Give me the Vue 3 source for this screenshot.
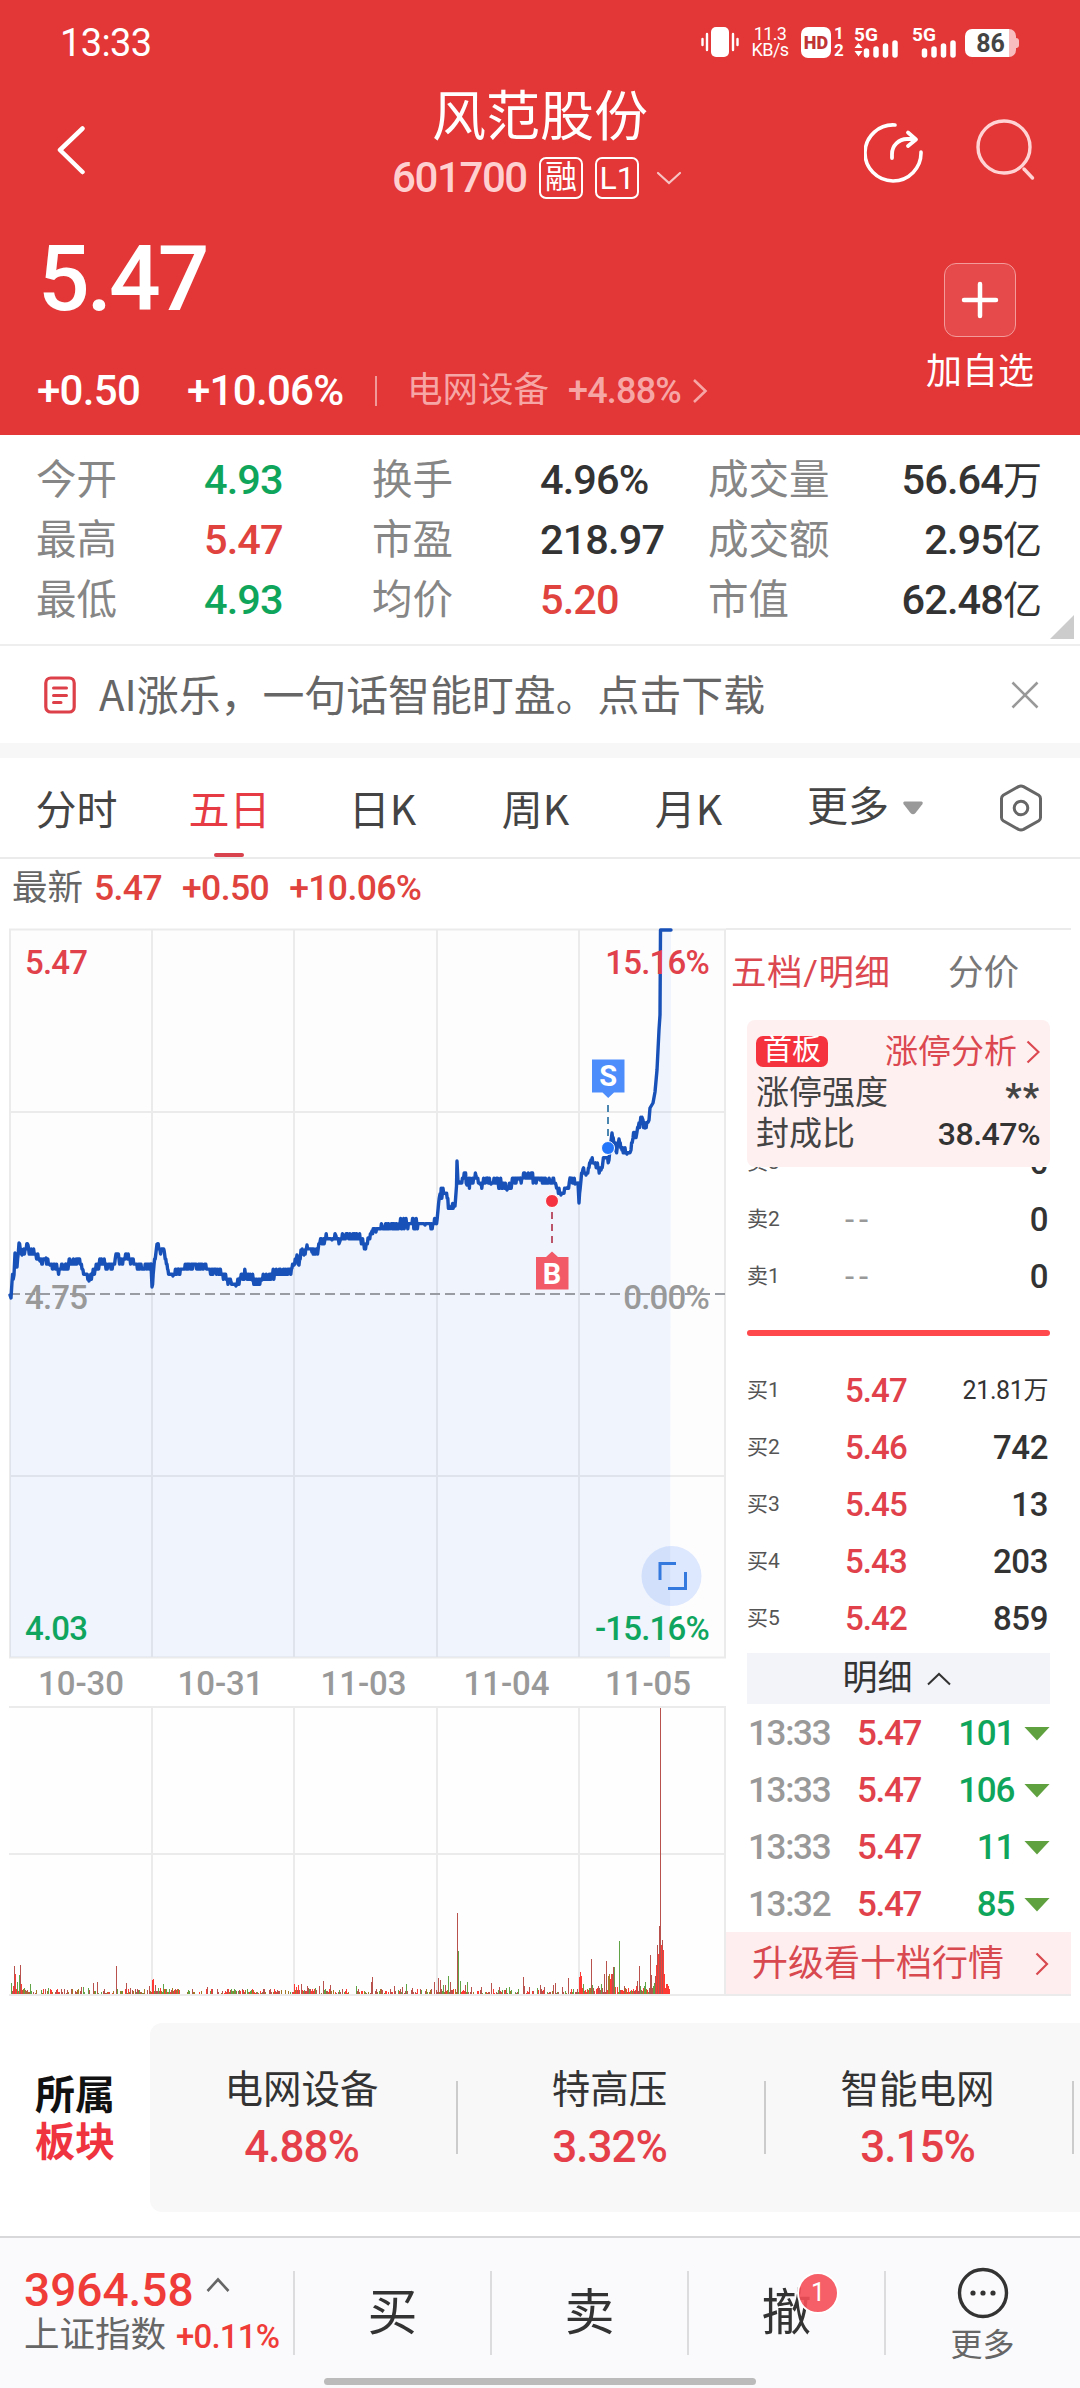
<script setup>
import { computed, ref } from 'vue'

const stats = [
  [
    { label: '今开', value: '4.93', tone: 'down' },
    { label: '换手', value: '4.96%' },
    { label: '成交量', value: '56.64', unit: '万' },
  ],
  [
    { label: '最高', value: '5.47', tone: 'up' },
    { label: '市盈', value: '218.97' },
    { label: '成交额', value: '2.95', unit: '亿' },
  ],
  [
    { label: '最低', value: '4.93', tone: 'down' },
    { label: '均价', value: '5.20', tone: 'up' },
    { label: '市值', value: '62.48', unit: '亿' },
  ],
]

const tabs = ['分时', '五日', '日K', '周K', '月K']
const activeTab = ref('五日')

const asks = [
  { name: '卖3', price: '--', qty: '0' },
  { name: '卖2', price: '--', qty: '0' },
  { name: '卖1', price: '--', qty: '0' },
]

const bids = [
  { name: '买1', price: '5.47', qty: '21.81', unit: '万' },
  { name: '买2', price: '5.46', qty: '742' },
  { name: '买3', price: '5.45', qty: '13' },
  { name: '买4', price: '5.43', qty: '203' },
  { name: '买5', price: '5.42', qty: '859' },
]

const ticks = [
  { time: '13:33', price: '5.47', qty: '101' },
  { time: '13:33', price: '5.47', qty: '106' },
  { time: '13:33', price: '5.47', qty: '11' },
  { time: '13:32', price: '5.47', qty: '85' },
]

const sectors = [
  { name: '电网设备', value: '4.88%' },
  { name: '特高压', value: '3.32%' },
  { name: '智能电网', value: '3.15%' },
]

const dates = [
  { x: 81, label: '10-30' },
  { x: 220.5, label: '10-31' },
  { x: 363.5, label: '11-03' },
  { x: 506.5, label: '11-04' },
  { x: 648, label: '11-05' },
]

const dayLines = [152, 294, 437, 579]

// small deterministic generator so the minute noise is stable between renders
const makeRandom = (seed) => {
  let s = seed
  return () => {
    s = (s * 16807) % 2147483647
    return s / 2147483647
  }
}

const anchors = [
  [10, 375], [11, 378], [12, 362], [14, 355], [15, 333], [17, 347], [19, 323], [22, 335], [25, 330], [28, 325],
  [30, 332], [36, 335], [40, 341], [46, 338], [50, 345], [58, 350], [65, 345], [75, 342], [79, 339], [83, 350],
  [89, 361], [95, 350], [103, 340], [108, 346], [114, 344], [116, 334], [122, 344], [127, 336], [132, 340],
  [138, 346], [151, 344], [152, 367], [154, 345], [157, 324], [160, 330], [164, 330], [168, 350], [173, 356],
  [178, 350], [190, 345], [204, 345], [210, 350], [218, 352], [225, 358], [231, 362], [236, 366], [240, 358],
  [246, 354], [252, 360], [262, 360], [268, 358], [272, 354], [278, 353], [286, 353], [292, 348], [294, 345],
  [297, 335], [299, 345], [301, 330], [304, 335], [307, 325], [312, 332], [317, 331], [320, 322], [325, 319],
  [332, 320], [336, 316], [340, 321], [348, 314], [356, 317], [362, 320], [365, 327], [368, 318], [372, 311],
  [376, 312], [382, 306], [390, 306], [400, 304], [412, 303], [425, 305], [436, 303], [438, 290], [440, 274],
  [446, 274], [449, 286], [455, 286], [456.5, 266], [457, 241], [458, 262], [460, 262], [465, 255], [467, 265], [476, 256], [480, 264],
  [487, 260], [491, 264], [500, 263], [507, 270], [513, 259], [520, 260], [527, 254], [532, 258], [540, 260],
  [550, 261], [556, 265], [561, 275], [568, 267], [570, 258], [575, 264], [578, 263], [579, 283], [581, 260],
  [583, 249], [586, 255], [591, 240], [595, 244], [601, 250], [604, 238], [609, 240], [612, 213], [616, 231],
  [619, 219], [622, 230], [627, 234], [631, 230], [633, 218], [637, 212], [639, 203], [643, 200], [645, 208],
  [649, 200], [650, 188], [653, 183], [655, 172], [657, 150], [659, 110], [660, 95], [660.5, 10], [671, 10],
]

const STEP = 5.06
const NOISY_UNTIL = 648

const linePoints = computed(() => {
  const rand = makeRandom(4217)
  const points = []
  for (let i = 0; i < anchors.length - 1; i += 1) {
    const [x0, y0] = anchors[i]
    const [x1, y1] = anchors[i + 1]
    points.push([x0, y0])
    if (x0 >= NOISY_UNTIL) continue
    for (let x = x0 + 0.6; x < x1 - 0.4; x += 0.6) {
      const mid = y0 + ((y1 - y0) * (x - x0)) / (x1 - x0)
      const y = Math.round((mid + (rand() - 0.5) * 7) / STEP) * STEP
      points.push([Number(x.toFixed(1)), Number(y.toFixed(1))])
    }
  }
  points.push(anchors[anchors.length - 1])
  return points
})

const linePath = computed(() => `M${linePoints.value.map((p) => p.join(' ')).join('L')}`)
const areaPath = computed(() => `${linePath.value}L670 737L10 737Z`)

// [x, height, tone] for the bars that stand out of the minute-volume floor
const spikes = [
  [11, 11, 'g'], [13, 8, 'r'], [14, 28, 'd'], [15, 20, 'r'], [17, 12, 'g'], [19, 19, 'g'], [20, 29, 'd'], [21, 10, 'r'],
  [30, 10, 'g'], [48, 6, 'g'], [81, 7, 'd'], [83, 7, 'g'], [88, 6, 'g'], [93, 11, 'd'], [97, 12, 'd'], [116, 28, 'd'],
  [126, 11, 'd'], [130, 6, 'd'], [137, 5, 'd'], [149, 8, 'd'], [152, 14, 'r'], [153, 15, 'r'], [155, 9, 'd'], [158, 6, 'g'],
  [163, 10, 'g'], [166, 5, 'g'], [175, 5, 'd'], [207, 7, 'd'], [227, 5, 'd'], [235, 4, 'g'], [270, 5, 'd'], [277, 4, 'd'],
  [294, 10, 'r'], [296, 7, 'r'], [298, 9, 'r'], [301, 10, 'd'], [307, 8, 'd'], [319, 8, 'd'], [323, 13, 'd'], [330, 9, 'd'],
  [342, 5, 'd'], [356, 8, 'g'], [371, 12, 'd'], [372, 17, 'd'], [394, 8, 'd'], [402, 7, 'd'], [406, 10, 'g'], [412, 6, 'd'],
  [434, 12, 'd'], [438, 16, 'd'], [440, 14, 'd'], [443, 9, 'g'], [445, 9, 'd'], [448, 18, 'g'], [450, 12, 'd'], [457, 81, 'd'],
  [458, 43, 'g'], [460, 13, 'g'], [465, 9, 'd'], [467, 12, 'g'], [471, 7, 'd'], [481, 7, 'd'], [491, 11, 'd'], [499, 7, 'd'],
  [506, 6, 'g'], [509, 7, 'g'], [523, 17, 'd'], [524, 8, 'd'], [529, 7, 'd'], [537, 6, 'g'], [540, 9, 'd'], [544, 7, 'd'],
  [553, 9, 'd'], [555, 11, 'd'], [562, 7, 'd'], [568, 16, 'd'], [579, 17, 'r'], [580, 22, 'r'], [581, 18, 'r'], [583, 10, 'g'],
  [591, 35, 'd'], [592, 9, 'g'], [598, 8, 'd'], [601, 10, 'g'], [604, 20, 'd'], [606, 33, 'd'], [608, 18, 'o'], [609, 20, 'o'],
  [610, 15, 'r'], [611, 20, 'r'], [612, 20, 'd'], [613, 27, 'd'], [614, 27, 'g'], [615, 7, 'r'], [617, 7, 'r'], [619, 53, 'g'],
  [624, 8, 'd'], [636, 8, 'r'], [637, 13, 'd'], [639, 28, 'd'], [640, 8, 'g'], [644, 8, 'g'], [645, 12, 'g'], [650, 39, 'd'],
  [651, 19, 'd'], [653, 8, 'g'], [654, 11, 'g'], [655, 18, 'd'], [656, 29, 'r'], [657, 49, 'd'], [658, 40, 'r'], [659, 68, 'd'],
  [660, 286, 'd'], [661, 49, 'r'], [662, 54, 'd'], [663, 44, 'r'], [664, 20, 'r'], [665, 6, 'r'], [666, 10, 'r'], [667, 10, 'r'],
  [668, 8, 'r'], [669, 5, 'r'],
]

const barColors = { r: '#ff3a34', d: '#b8524d', g: '#5fa346', o: '#a37a26' }

const bars = computed(() => {
  const rand = makeRandom(977)
  const used = new Map(spikes.map(([x, h, tone]) => [x, { x, h, tone }]))
  const result = []
  for (let x = 11; x < 670; x += 1) {
    const roll = rand()
    const pick = rand()
    if (used.has(x)) {
      result.push(used.get(x))
      continue
    }
    // the opening minutes of each session trade thicker than the rest
    const sinceOpen = (x - 10) % 142.4
    const busy = sinceOpen < 22 || x > 579
    if (roll < (busy ? 0.08 : 0.36)) continue
    const h = busy ? 2 + Math.floor(roll * 5) : 1 + Math.floor(roll * roll * 5)
    const tone = pick < 0.4 ? 'd' : pick < 0.62 ? 'r' : pick < 0.82 ? 'o' : 'g'
    result.push({ x, h, tone })
  }
  return result
})
</script>

<template>
  <div class="page">
    <header class="hero">
      <div class="status">
        <span class="status__time">13:33</span>
        <svg class="status__vibrate" viewBox="0 0 38 32">
          <rect x="10" y="1" width="18" height="30" rx="5" fill="#fff" />
          <path d="M1.5 13v6M36.5 13v6M6 8v16M32 8v16" stroke="#fff" stroke-width="2.4" stroke-linecap="round" />
        </svg>
        <div class="status__net"><span>11.3</span><span>KB/s</span></div>
        <div class="status__hd">HD</div>
        <div class="status__sim"><span>1</span><span>2</span></div>
        <svg class="status__signal" viewBox="0 0 46 32">
          <text x="0" y="15" class="signal-text">5G</text>
          <path d="M0.5 22L4.5 17L8.500 22ZM0.5 25L4.5 30.5L8.5 25Z" fill="#fff" />
          <path d="M12.5 25v4M22 23v6M31.5 20v9M41 17v12" stroke="#fff" stroke-width="5.5" stroke-linecap="round" />
        </svg>
        <svg class="status__signal status__signal--second" viewBox="0 0 46 32">
          <text x="0" y="15" class="signal-text">5G</text>
          <path d="M12.5 25v4M22 23v6M31.5 20v9M41 17v12" stroke="#fff" stroke-width="5.5" stroke-linecap="round" />
        </svg>
        <div class="battery"><span class="battery__body">86</span><i class="battery__cap" /></div>
      </div>

      <div class="nav">
        <svg class="nav__back" viewBox="0 0 30 50">
          <path d="M26.5 3.5L4 25L26.5 47" fill="none" stroke="#fff" stroke-width="4.5" stroke-linecap="round" stroke-linejoin="round" />
        </svg>
        <div class="nav__title">
          <h1>风范股份</h1>
          <div class="nav__code">
            <span class="num nav__symbol">601700</span>
            <span class="chip">融</span>
            <span class="chip chip--latin">L1</span>
            <svg class="nav__more" viewBox="0 0 26 14">
              <path d="M2 2L13 12L24 2" fill="none" stroke="#fff" stroke-opacity="0.7" stroke-width="2.2" stroke-linecap="round" />
            </svg>
          </div>
        </div>
        <svg class="nav__share" viewBox="0 0 60 62">
          <path d="M31 3A28 28 0 1 0 57 30" fill="none" stroke="#fff" stroke-width="3.6" stroke-linecap="round" />
          <path d="M28 36V32A15 15 0 0 1 43 17H51M44 10.5L52 17.5L44 24" fill="none" stroke="#fff" stroke-width="3.8" stroke-linecap="round" stroke-linejoin="round" />
        </svg>
        <svg class="nav__search" viewBox="0 0 60 62">
          <g fill="none" stroke="#ffd3d3" stroke-width="3.4" stroke-linecap="round">
            <circle cx="28" cy="28" r="26" />
            <path d="M48 50L56.5 59" />
          </g>
        </svg>
      </div>

      <div class="quote">
        <div class="quote__left">
          <div class="quote__price">5.47</div>
          <div class="quote__row">
            <span class="num quote__change">+0.50</span>
            <span class="num quote__pct">+10.06%</span>
            <i class="quote__rule" />
            <span class="quote__sector">电网设备</span>
            <span class="num quote__sector-pct">+4.88%</span>
            <svg class="quote__arrow" viewBox="0 0 16 26">
              <path d="M2 2L13.5 13L2 24" fill="none" stroke="#f7a6a6" stroke-width="2.6" />
            </svg>
          </div>
        </div>
        <div class="favorite">
          <div class="favorite__box">
            <svg viewBox="0 0 72 72">
              <path d="M36 20V52M20 36H52" stroke="#fff" stroke-width="4.5" stroke-linecap="round" />
            </svg>
          </div>
          <span>加自选</span>
        </div>
      </div>
    </header>

    <section class="stats">
      <div v-for="(row, i) in stats" :key="i" class="stats__row">
        <template v-for="item in row" :key="item.label">
          <span class="stats__label">{{ item.label }}</span>
          <span class="stats__value num" :class="item.tone">{{ item.value }}<b v-if="item.unit">{{ item.unit }}</b></span>
        </template>
      </div>
      <i class="stats__corner" />
    </section>

    <section class="banner">
      <svg class="banner__icon" viewBox="0 0 32 38">
        <rect x="1.8" y="2" width="28.4" height="34" rx="5" fill="none" stroke="#dd4048" stroke-width="3.2" />
        <path d="M9.5 12H22.5M9.5 19.5H22.5M9.5 26.5H17" stroke="#dd4048" stroke-width="3" stroke-linecap="round" />
      </svg>
      <span class="banner__text">AI涨乐，一句话智能盯盘。点击下载</span>
      <svg class="banner__close" viewBox="0 0 28 28">
        <path d="M1.5 1.5L26.5 26.5M26.5 1.5L1.5 26.5" stroke="#999" stroke-width="2.6" />
      </svg>
    </section>

    <nav class="tabs">
      <button
        v-for="tab in tabs"
        :key="tab"
        type="button"
        class="tabs__item"
        :class="{ 'tabs__item--active': tab === activeTab }"
        @click="activeTab = tab"
      >
        {{ tab }}
      </button>
      <span class="tabs__more">更多</span>
      <svg class="tabs__caret" viewBox="0 0 20 14"><path d="M1.5 0.5H18.5Q20.5 1 19.3 3.2L12.5 12Q10 14.5 7.5 12L0.7 3.2Q-0.5 1 1.5 0.5Z" fill="#999" /></svg>
      <svg class="tabs__gear" viewBox="0 0 44 48">
        <path d="M19.5 2.6Q22 1.3 24.5 2.6L39.8 11.2Q41.5 12.4 41.5 14.5V33.5Q41.5 35.6 39.8 36.8L24.5 45.4Q22 46.7 19.5 45.4L4.2 36.8Q2.5 35.6 2.5 33.5V14.5Q2.5 12.4 4.2 11.2Z" fill="none" stroke="#666" stroke-width="3" />
        <circle cx="22" cy="24" r="6.8" fill="none" stroke="#666" stroke-width="3" />
      </svg>
    </nav>

    <div class="latest">
      <span class="latest__label">最新</span>
      <span class="num">5.47</span>
      <span class="num">+0.50</span>
      <span class="num">+10.06%</span>
    </div>

    <main class="market">
      <svg class="chart" viewBox="0 0 726 1080">
        <rect x="10" y="9" width="715" height="729" fill="#fdfdfe" />
        <rect x="10" y="787" width="715" height="288" fill="#fefefe" />
        <g stroke="#ebebec" stroke-width="2" fill="none">
          <path d="M9 9.5H726M10 192H725M10 556H725M9 737.5H726M9 787H726M9 934H726M9 1075H726M10 9V738M725 9V738M725 787V1075" />
          <path v-for="x in dayLines" :key="x" :d="`M${x} 10V737M${x} 787V1075`" />
        </g>
        <path :d="areaPath" fill="#4a86f0" fill-opacity="0.08" />
        <path d="M10 374H725" stroke="#9a9ca3" stroke-width="2" stroke-dasharray="10 5" />
        <path :d="linePath" fill="none" stroke="#1851b8" stroke-width="3.4" stroke-linejoin="round" stroke-linecap="round" />

        <g class="chart__text">
          <text x="25" y="54" class="is-up">5.47</text>
          <text x="709" y="54" text-anchor="end" class="is-up">15.16%</text>
          <text x="25" y="389" class="is-flat">4.75</text>
          <text x="709" y="389" text-anchor="end" class="is-flat">0.00%</text>
          <text x="709" y="720" text-anchor="end" class="is-down">-15.16%</text>
          <text x="25" y="720" class="is-down">4.03</text>
          <text v-for="d in dates" :key="d.label" :x="d.x" y="775" text-anchor="middle" class="is-flat is-date">{{ d.label }}</text>
        </g>

        <g>
          <path d="M608 185V222" stroke="#4b86b0" stroke-width="2" stroke-dasharray="7 5" />
          <path d="M592 139.5H624.5V172.5H614L608.2 178L602.5 172.5H592Z" fill="#4d8dfb" />
          <text x="608.2" y="166" text-anchor="middle" class="chart__flag">S</text>
          <circle cx="608" cy="228" r="6.5" fill="#2375fa" stroke="#fff" stroke-width="1" />
        </g>
        <g>
          <path d="M552 292V328" stroke="#bb5569" stroke-width="2" stroke-dasharray="7 5" />
          <path d="M536 337H546L552 331.5L558 337H568.5V369.5H536Z" fill="#f25a68" />
          <text x="552" y="363.5" text-anchor="middle" class="chart__flag">B</text>
          <circle cx="552" cy="281" r="6.5" fill="#f5323f" stroke="#fff" stroke-width="1" />
        </g>

        <circle cx="671.5" cy="656" r="30" fill="#5e90fb" fill-opacity="0.2" />
        <path d="M660 660V643.5H676M685.5 652V668.5H668" fill="none" stroke="#3479de" stroke-width="3" />

        <rect v-for="bar in bars" :key="bar.x" :x="bar.x" :y="1074 - bar.h" width="1" :height="bar.h" :fill="barColors[bar.tone]" />
      </svg>

      <aside class="side">
        <div class="side__tabs"><span class="side__tab--active">五档/明细</span><span>分价</span></div>
        <div class="limit">
          <div class="limit__row">
            <span class="limit__badge">首板</span>
            <span class="limit__link">涨停分析</span>
            <svg class="limit__arrow" viewBox="0 0 14 24"><path d="M1.5 1.5L12.5 12L1.5 22.5" fill="none" stroke="#dc4850" stroke-width="2.2" /></svg>
          </div>
          <div class="limit__row"><span>涨停强度</span><span class="limit__stars">**</span></div>
          <div class="limit__row"><span>封成比</span><span class="num limit__num">38.47%</span></div>
        </div>
        <div class="asks">
          <div v-for="row in asks" :key="row.name" class="level">
            <span class="level__name">{{ row.name }}</span>
            <span class="num level__dash">{{ row.price }}</span>
            <span class="num level__qty">{{ row.qty }}</span>
          </div>
        </div>
        <div class="ratio" />
        <div class="bids">
          <div v-for="row in bids" :key="row.name" class="level">
            <span class="level__name">{{ row.name }}</span>
            <span class="num level__price">{{ row.price }}</span>
            <span class="num level__qty" :class="{ 'level__qty--small': row.unit }">{{ row.qty }}{{ row.unit }}</span>
          </div>
        </div>
        <div class="detail">
          <span>明细</span>
          <svg viewBox="0 0 24 14"><path d="M1 12.5L12 2L23 12.5" fill="none" stroke="#333" stroke-width="2" /></svg>
        </div>
        <div class="ticks">
          <div v-for="(tick, i) in ticks" :key="i" class="tick num">
            <span class="tick__time">{{ tick.time }}</span>
            <span class="tick__price">{{ tick.price }}</span>
            <span class="tick__qty">{{ tick.qty }}</span>
            <i class="tick__down" />
          </div>
        </div>
        <div class="upgrade">
          <span>升级看十档行情</span>
          <svg viewBox="0 0 14 24"><path d="M1.5 1.5L12 12L1.5 22.5" fill="none" stroke="#d8494f" stroke-width="2.2" /></svg>
        </div>
      </aside>
    </main>

    <section class="sectors">
      <div class="sectors__title"><span>所属</span><span class="sectors__title-red">板块</span></div>
      <div class="sectors__list">
        <div v-for="item in sectors" :key="item.name" class="sector">
          <span class="sector__name">{{ item.name }}</span>
          <span class="num sector__value">{{ item.value }}</span>
        </div>
      </div>
    </section>

    <footer class="dock">
      <div class="dock__index">
        <div class="dock__line">
          <span class="num dock__point">3964.58</span>
          <svg viewBox="0 0 24 16"><path d="M1.5 14L12 2.5L22.5 14" fill="none" stroke="#666" stroke-width="2.6" /></svg>
        </div>
        <div class="dock__line dock__line--sub"><span>上证指数</span><span class="num dock__pct">+0.11%</span></div>
      </div>
      <div class="dock__action">买</div>
      <div class="dock__action">卖</div>
      <div class="dock__action">撤<em class="dock__badge">1</em></div>
      <div class="dock__more">
        <svg viewBox="0 0 52 52">
          <circle cx="26" cy="26" r="23.5" fill="none" stroke="#333" stroke-width="3.4" />
          <g fill="#333"><circle cx="16" cy="26" r="2.6" /><circle cx="26" cy="26" r="2.6" /><circle cx="36" cy="26" r="2.6" /></g>
        </svg>
        <span>更多</span>
      </div>
      <i class="dock__home" />
    </footer>
  </div>
</template>

<style>
body {
  margin: 0;
  background: #fff;
}
</style>

<style scoped>
.page {
  width: 1080px;
  height: 2388px;
  overflow: hidden;
  display: flex;
  flex-direction: column;
  background: #fff;
  color: #333;
  font-family: Roboto, 'Noto Sans CJK SC', sans-serif;
  line-height: 1;
  white-space: nowrap;
}

.page * {
  box-sizing: border-box;
}

.page svg {
  display: block;
  flex: none;
}

.num {
  font-family: Roboto, 'Noto Sans CJK SC', sans-serif;
  font-weight: 500;
}

.up {
  color: #e0423e;
}

.down {
  color: #0fa65c;
}

.hero {
  height: 435px;
  flex: none;
  background: #e33636;
  color: #fff;
}

.status {
  height: 84px;
  display: flex;
  align-items: center;
  padding-left: 60px;
}

.status__time {
  width: 641px;
  padding-top: 1px;
  font-size: 38px;
  letter-spacing: -0.6px;
}

.status__vibrate {
  width: 38px;
  height: 32px;
}

.status__net {
  width: 36px;
  margin-left: 13px;
  display: flex;
  flex-direction: column;
  align-items: center;
  font-size: 18px;
  line-height: 16.5px;
  letter-spacing: -0.6px;
}

.status__hd {
  width: 30px;
  height: 31px;
  margin-left: 13px;
  border-radius: 7px;
  background: #fff;
  color: #c03436;
  font-size: 18px;
  font-weight: 900;
  line-height: 31px;
  text-align: center;
}

.status__sim {
  width: 12px;
  margin-left: 2px;
  display: flex;
  flex-direction: column;
  align-items: center;
  font-size: 17px;
  font-weight: 700;
  line-height: 17px;
}

.status__signal {
  width: 46px;
  height: 32px;
  margin-left: 9px;
  overflow: visible;
}

.status__signal--second {
  margin-left: 12px;
}

.signal-text {
  fill: #fff;
  font-size: 19px;
  font-weight: 700;
}

.battery {
  display: flex;
  align-items: center;
  margin: 2px 0 0 7px;
}

.battery__body {
  width: 51px;
  height: 28px;
  border-radius: 7px;
  background: linear-gradient(90deg, #fff 44px, #f8bcbe 44px);
  color: #444;
  font-size: 25px;
  font-weight: 700;
  line-height: 29px;
  text-align: center;
}

.battery__cap {
  width: 3px;
  height: 10px;
  border-radius: 0 3px 3px 0;
  background: #f8bcbe;
}

.nav {
  height: 132px;
  display: flex;
}

.nav__back {
  width: 30px;
  height: 50px;
  margin: 41px 0 0 56px;
}

.nav__title {
  width: 310px;
  margin-left: 306px;
}

.nav__title h1 {
  margin: 5px 0 0 40px;
  font-size: 54px;
  font-weight: 400;
  line-height: 58px;
}

.nav__code {
  height: 42px;
  margin-top: 10px;
  display: flex;
  align-items: center;
}

.nav__symbol {
  width: 147px;
  color: #ffd0d0;
  font-size: 42px;
  letter-spacing: -1.4px;
}

.chip {
  width: 44px;
  height: 42px;
  margin-right: 12px;
  border: 2px solid #fff;
  border-radius: 7px;
  font-size: 32px;
  line-height: 36px;
  text-align: center;
}

.chip--latin {
  line-height: 39px;
}

.nav__more {
  width: 26px;
  height: 14px;
  margin-left: 5px;
}

.nav__share {
  width: 60px;
  height: 62px;
  margin: 38px 0 0 162px;
}

.nav__search {
  width: 60px;
  height: 62px;
  margin: 35px 0 0 52px;
}

.quote {
  height: 219px;
  display: flex;
  justify-content: space-between;
}

.quote__price {
  margin: 18px 0 0 38px;
  height: 90px;
  font-size: 91px;
  font-weight: 500;
  letter-spacing: -3px;
  line-height: 90px;
}

.quote__row {
  height: 46px;
  margin-top: 44px;
  padding-left: 37px;
  display: flex;
  align-items: center;
  font-size: 42px;
}

.quote__change {
  width: 150px;
  letter-spacing: -0.7px;
}

.quote__pct {
  width: 188px;
  letter-spacing: -0.7px;
}

.quote__rule {
  width: 2px;
  height: 30px;
  background: #f09a9a;
}

.quote__sector {
  width: 161px;
  margin-left: 30px;
  color: #f7a6a6;
  font-size: 35.5px;
}

.quote__sector-pct {
  width: 124px;
  color: #f7a6a6;
  font-size: 36px;
  letter-spacing: -0.8px;
}

.quote__arrow {
  width: 16px;
  height: 26px;
}

.favorite {
  width: 108px;
  margin: 47px 46px 0 0;
  display: flex;
  flex-direction: column;
  align-items: center;
  font-size: 36px;
}

.favorite__box {
  width: 72px;
  height: 74px;
  margin-bottom: 17px;
  border: 1.5px solid #f39a9a;
  border-radius: 12px;
  background: #e64a4b;
  display: flex;
  align-items: center;
  justify-content: center;
}

.favorite__box svg {
  width: 72px;
  height: 72px;
}

.stats {
  position: relative;
  height: 211px;
  flex: none;
  padding-top: 15px;
  border-bottom: 2px solid #eee;
}

.stats__row {
  height: 60px;
  display: grid;
  grid-template-columns: 168px 168px 168px 168px 150px 184px;
  align-items: center;
  padding-left: 36px;
}

.stats__label {
  color: #868686;
  font-size: 40.5px;
}

.stats__value {
  font-size: 41.5px;
  letter-spacing: -0.9px;
}

.stats__value:last-child {
  text-align: right;
}

.stats__value b {
  font-size: 39px;
  font-weight: 400;
  letter-spacing: 0;
}

.stats__corner {
  position: absolute;
  right: 6px;
  bottom: 5px;
  width: 24px;
  height: 24px;
  background: #ccc;
  clip-path: polygon(100% 0, 100% 100%, 0 100%);
}

.banner {
  height: 112px;
  flex: none;
  padding: 0 41px 0 44px;
  display: flex;
  align-items: center;
  border-bottom: 15px solid #f7f7f7;
}

.banner__icon {
  width: 32px;
  height: 38px;
}

.banner__text {
  margin: -3px 0 0 23px;
  color: #666;
  font-family: 'Noto Sans CJK SC', sans-serif;
  font-size: 41.9px;
}

.banner__close {
  width: 28px;
  height: 28px;
  margin-left: auto;
}

.tabs {
  height: 101px;
  flex: none;
  display: flex;
  align-items: center;
  border-bottom: 2px solid #ebebeb;
}

.tabs__item {
  position: relative;
  width: 153px;
  height: 99px;
  padding: 0;
  border: 0;
  background: none;
  color: #444;
  font-family: 'Noto Sans CJK SC', sans-serif;
  font-size: 41px;
  line-height: 95px;
}

.tabs__item--active {
  color: #e63b45;
}

.tabs__item--active::after {
  content: '';
  position: absolute;
  left: 61px;
  bottom: 0;
  width: 30px;
  height: 4px;
  border-radius: 2px;
  background: #d8434d;
}

.tabs__more {
  margin-left: 42px;
  color: #444;
  font-size: 41px;
}

.tabs__caret {
  width: 20px;
  height: 14px;
  margin-left: 14px;
}

.tabs__gear {
  width: 44px;
  height: 48px;
  margin-left: 76px;
}

.latest {
  height: 61px;
  flex: none;
  padding: 0 0 2px 12px;
  display: flex;
  align-items: center;
  gap: 20px;
  color: #e0423e;
  font-size: 35.5px;
  letter-spacing: -0.6px;
}

.latest__label {
  margin-right: -9px;
  color: #666;
  letter-spacing: 0;
}

.market {
  height: 1080px;
  flex: none;
  display: flex;
}

.chart {
  width: 726px;
  height: 1080px;
}

.chart__text {
  font-size: 33px;
  font-weight: 500;
  letter-spacing: -0.8px;
}

.chart__flag {
  fill: #fff;
  font-size: 29px;
  font-weight: 700;
}

.is-up {
  fill: #e0414b;
}

.is-down {
  fill: #10a55f;
}

.is-flat {
  fill: #999;
}

.is-date {
  letter-spacing: 0;
}

.side {
  width: 345px;
  height: 1068px;
  margin-top: 8px;
  border-top: 2px solid #ebebec;
  border-bottom: 2px solid #ebebec;
}

.side__tabs {
  height: 90px;
  padding: 0 52px 2px 5px;
  display: flex;
  align-items: center;
  justify-content: space-between;
  color: #777;
  font-size: 35.5px;
}

.side__tab--active {
  color: #dc4850;
  letter-spacing: 0.6px;
}

.limit {
  position: relative;
  height: 147px;
  margin: 0 21px;
  padding: 11px 10px 0 9px;
  border-radius: 8px;
  background: #fef0f1;
  color: #444;
  font-size: 33px;
}

.limit__row {
  height: 41px;
  display: flex;
  align-items: center;
  justify-content: space-between;
}

.limit__badge {
  width: 72px;
  height: 31px;
  margin-right: 48px;
  border-radius: 7px;
  background: #f5333f;
  color: #fff;
  font-size: 29px;
  line-height: 29px;
  text-align: center;
}

.limit__link {
  color: #dc4850;
}

.limit__arrow {
  width: 14px;
  height: 24px;
}

.limit__stars {
  padding-top: 9px;
  font-size: 36px;
  font-weight: 700;
  letter-spacing: 1px;
}

.limit__num {
  color: #333;
  font-size: 32px;
  letter-spacing: -0.5px;
}

.asks {
  height: 138px;
  padding: 0 21px;
  display: flex;
  flex-direction: column;
  justify-content: flex-end;
  overflow: hidden;
}

.level {
  height: 57px;
  flex: none;
  display: grid;
  grid-template-columns: 98px 70px 1fr;
  align-items: center;
  padding: 0 2px 0 0;
}

.level__name {
  color: #555;
  font-size: 21px;
}

.level__dash {
  color: #999;
  font-size: 33px;
  font-weight: 400;
  letter-spacing: 5px;
}

.level__price {
  color: #e0414b;
  font-size: 33px;
  letter-spacing: -0.9px;
}

.level__qty {
  font-size: 33px;
  letter-spacing: -0.4px;
  text-align: right;
}

.level__qty--small {
  font-size: 25px;
  font-weight: 400;
}

.ratio {
  height: 6px;
  margin: 25px 21px 26px;
  border-radius: 3px;
  background: #ff484b;
}

.bids {
  padding: 0 21px;
}

.detail {
  height: 51px;
  margin: 6px 21px 0;
  padding-right: 4px;
  display: flex;
  align-items: center;
  justify-content: center;
  gap: 14px;
  background: #f3f4f9;
  color: #333;
  font-size: 35px;
}

.detail svg {
  width: 24px;
  height: 14px;
}

.ticks {
  padding: 0 21px;
}

.tick {
  height: 57px;
  display: grid;
  grid-template-columns: 109px 70px 1fr 36px;
  align-items: center;
  padding: 2px 0 0 1px;
  font-size: 35px;
  letter-spacing: -1.3px;
}

.tick__time {
  color: #999;
}

.tick__price {
  color: #e0414b;
}

.tick__qty {
  color: #0fa65c;
  text-align: right;
}

.tick__down {
  width: 26px;
  height: 14px;
  margin-left: 10px;
  background: #5fa03f;
  clip-path: polygon(0 0, 100% 0, 50% 100%);
}

.upgrade {
  height: 62px;
  padding: 2px 22px 0 26px;
  display: flex;
  align-items: center;
  justify-content: space-between;
  background: #feeeef;
  color: #d8494f;
  font-size: 36px;
}

.upgrade svg {
  width: 14px;
  height: 24px;
}

.sectors {
  height: 236px;
  flex: none;
  padding-top: 23px;
  display: flex;
}

.sectors__title {
  width: 150px;
  height: 189px;
  display: flex;
  flex-direction: column;
  align-items: center;
  justify-content: center;
  padding-top: 2px;
  color: #111;
  font-size: 40px;
  font-weight: 700;
  line-height: 47px;
}

.sectors__title-red {
  color: #f0343f;
}

.sectors__list {
  width: 930px;
  height: 189px;
  overflow: hidden;
  display: flex;
  align-items: center;
  border-radius: 12px 0 0 12px;
  background: #f8f8f8;
}

.sector {
  width: 308px;
  height: 73px;
  flex: none;
  display: flex;
  flex-direction: column;
  align-items: center;
  justify-content: center;
  padding: 3px 3px 0 0;
  border-right: 2px solid #ccc;
}

.sector__name {
  font-size: 38.5px;
  line-height: 56px;
}

.sector__value {
  color: #e5404a;
  font-size: 44px;
  line-height: 58px;
  letter-spacing: -1px;
}

.dock {
  position: relative;
  height: 152px;
  flex: none;
  display: flex;
  border-top: 2px solid #d8d8da;
  background: #fafafc;
}

.dock__index {
  width: 293px;
  padding: 26px 0 0 24px;
}

.dock__line {
  height: 52px;
  display: flex;
  align-items: center;
  gap: 12px;
}

.dock__line svg {
  width: 24px;
  height: 16px;
  margin-top: -10px;
}

.dock__line--sub {
  height: 40px;
  gap: 10px;
  color: #666;
  font-size: 35.5px;
}

.dock__point {
  color: #f03c38;
  font-size: 46px;
}

.dock__pct {
  color: #f03c38;
  font-size: 33px;
  letter-spacing: -0.8px;
}

.dock__action {
  position: relative;
  width: 197px;
  height: 84px;
  margin-top: 33px;
  border-left: 2px solid #dcdcde;
  font-size: 50px;
  line-height: 84px;
  text-align: center;
}

.dock__badge {
  position: absolute;
  left: 108px;
  top: 1px;
  width: 42px;
  height: 42px;
  border: 2px solid #fff;
  border-radius: 50%;
  background: rgba(245, 76, 88, 0.9);
  color: #fff;
  font-size: 25px;
  font-style: normal;
  line-height: 38px;
}

.dock__more {
  width: 195px;
  height: 84px;
  margin-top: 33px;
  display: flex;
  flex-direction: column;
  align-items: center;
  border-left: 2px solid #dcdcde;
  color: #666;
  font-size: 32px;
}

.dock__more svg {
  width: 52px;
  height: 52px;
  margin: -4px 0 10px;
}

.dock__home {
  position: absolute;
  left: 324px;
  bottom: 3px;
  width: 432px;
  height: 7px;
  border-radius: 4px;
  background: #bbb;
}
</style>
